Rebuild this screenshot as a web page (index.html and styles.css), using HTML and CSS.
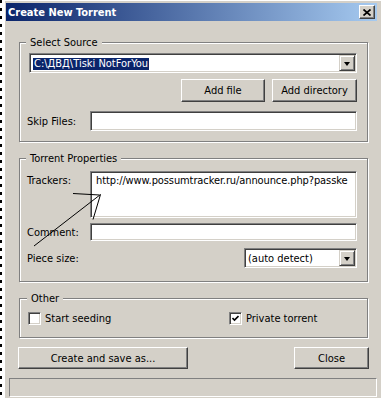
FILE: index.html
```html
<!DOCTYPE html>
<html>
<head>
<meta charset="utf-8">
<title>Create New Torrent</title>
<link rel="stylesheet" href="styles.css">
</head>
<body>
<div class="strip"></div>
<div class="window">
  <div class="titlebar">
    <span class="title">Create New Torrent</span>
    <span class="close-btn"><svg width="8" height="7" viewBox="0 0 8 7"><path d="M0.5 0.5 L7.5 6.5 M7.5 0.5 L0.5 6.5" stroke="#000" stroke-width="1.7" fill="none"/></svg></span>
  </div>
  <div class="body">
    <fieldset class="group g-source">
      <legend>Select Source</legend>
      <div class="combo">
        <span class="combo-value"><span class="sel">C:\ДВД\Tiski NotForYou</span></span>
        <span class="drop"><span class="tri"></span></span>
      </div>
      <div class="btn-row">
        <button class="btn w-addfile">Add file</button>
        <button class="btn w-adddir">Add directory</button>
      </div>
      <div class="field-row r-skip">
        <span class="lbl">Skip Files:</span>
        <div class="input"></div>
      </div>
    </fieldset>

    <fieldset class="group g-props">
      <legend>Torrent Properties</legend>
      <div class="field-row r-trackers">
        <span class="lbl lbl-top">Trackers:</span>
        <div class="input textarea"><span class="text">http://www.possumtracker.ru/announce.php?passke</span></div>
      </div>
      <div class="field-row r-comment">
        <span class="lbl">Comment:</span>
        <div class="input"></div>
      </div>
      <div class="field-row r-piece">
        <span class="lbl">Piece size:</span>
        <div class="combo select">
          <span class="combo-value">(auto detect)</span>
          <span class="drop"><span class="tri"></span></span>
        </div>
      </div>
    </fieldset>

    <fieldset class="group g-other">
      <legend>Other</legend>
      <div class="check-grid">
        <span class="check-item"><span class="checkbox"></span>Start seeding</span>
        <span class="check-item"><span class="checkbox checked"><svg width="7" height="7" viewBox="0 0 7 7"><path d="M0.5 3 L2.5 5 L6.5 1" stroke="#000" stroke-width="1.6" fill="none"/></svg></span>Private torrent</span>
      </div>
    </fieldset>

    <div class="action-row">
      <button class="btn w-create">Create and save as...</button>
      <button class="btn w-close">Close</button>
    </div>

    <div class="statusbar"></div>
  </div>
</div>
<svg class="annot" width="381" height="398" viewBox="0 0 381 398">
  <path d="M73 193.5 L99.5 195 M100.5 194.5 L93 219.5 M100.5 194.5 L34 246" stroke="#000" stroke-width="1" fill="none"/>
</svg>
</body>
</html>
```
FILE: styles.css
```css
* { box-sizing: border-box; }
html, body { margin: 0; padding: 0; }
body {
  width: 381px;
  height: 398px;
  overflow: hidden;
  position: relative;
  display: flex;
  background: #fff;
  font-family: "DejaVu Sans Condensed", "Liberation Sans", sans-serif;
  font-size: 11px;
  line-height: 13px;
  color: #000;
}
.strip {
  flex: none;
  width: 4px;
  background: repeating-linear-gradient(to bottom, #000 0 3px, #fff 3px 8px) no-repeat left top / 2px 100%, #fff;
}
.window {
  flex: none;
  width: 377px;
  min-width: 0;
  display: flex;
  flex-direction: column;
  background: #D4D0C8;
  padding: 3px 4px 0 2px;
  box-shadow: inset 1px 1px 0 #fff;
}
.titlebar {
  flex: none;
  height: 18px;
  display: flex;
  align-items: center;
  justify-content: space-between;
  padding: 0 2px 0 2px;
  background: linear-gradient(to right, #0A246A, #A6CAF0);
}
.title {
  color: #fff;
  font-weight: bold;
  font-size: 11px;
}
.close-btn {
  width: 16px;
  height: 14px;
  display: flex;
  align-items: center;
  justify-content: center;
  background: #D4D0C8;
  border: 1px solid;
  border-color: #fff #404040 #404040 #fff;
  box-shadow: inset -1px -1px 0 #808080;
}
.body {
  flex: 1;
  min-width: 0;
  display: flex;
  flex-direction: column;
}
.group {
  margin: 0 9px 0 13px;
  border: 1px solid #808080;
  box-shadow: inset 1px 1px 0 #fff, 1px 1px 0 #fff;
  min-inline-size: 0;
  min-width: 0;
}
.group legend {
  padding: 0 4px;
  margin-left: -1px;
  line-height: 13px;
  background: #D4D0C8;
}
.g-source { margin-top: 15px; padding: 4px 10px 10px 7px; }
.g-props { margin-top: 10px; padding: 6px 10px 13px 7px; }
.g-other { margin-top: 10px; padding: 7px 10px 12px 8px; }

.combo {
  display: flex;
  align-items: center;
  height: 20px;
  margin-left: 2px;
  background: #fff;
  border: 1px solid;
  border-color: #808080 #fff #fff #808080;
  box-shadow: inset 1px 1px 0 #404040, inset -1px -1px 0 #D4D0C8;
  padding: 1px;
}
.combo-value {
  flex: 1;
  min-width: 0;
  padding-left: 2px;
  white-space: nowrap;
  overflow: hidden;
}
.sel {
  display: inline-block;
  background: #0A246A;
  color: #fff;
  line-height: 12px;
  padding: 0 1px;
}
.drop {
  flex: none;
  width: 16px;
  height: 16px;
  display: flex;
  align-items: center;
  justify-content: center;
  background: #D4D0C8;
  border: 1px solid;
  border-color: #D4D0C8 #404040 #404040 #D4D0C8;
  box-shadow: inset 1px 1px 0 #fff, inset -1px -1px 0 #808080;
}
.tri {
  width: 0;
  height: 0;
  border-left: 3.5px solid transparent;
  border-right: 3.5px solid transparent;
  border-top: 4px solid #000;
  margin-top: 1px;
}
.btn-row {
  display: flex;
  justify-content: flex-end;
  gap: 7px;
  margin-top: 6px;
}
.btn {
  font: inherit;
  color: #000;
  height: 23px;
  padding: 0;
  background: #D4D0C8;
  border: 1px solid;
  border-color: #fff #404040 #404040 #fff;
  box-shadow: inset -1px -1px 0 #808080;
}
.w-addfile { width: 84px; }
.w-adddir { width: 85px; }

.field-row {
  display: flex;
  align-items: center;
  min-width: 0;
}
.lbl {
  flex: none;
  width: 63px;
}
.lbl-top { align-self: flex-start; padding-top: 3px; }
.input {
  flex: 1;
  min-width: 0;
  height: 20px;
  background: #fff;
  border: 1px solid;
  border-color: #808080 #fff #fff #808080;
  box-shadow: inset 1px 1px 0 #404040, inset -1px -1px 0 #D4D0C8;
}
.r-skip { margin-top: 9px; }
.textarea {
  height: 47px;
  padding: 2px 2px 0 5px;
  overflow: hidden;
  white-space: nowrap;
}
.textarea .text { letter-spacing: -0.1px; }
.r-comment { margin-top: 5px; }
.r-comment .input { height: 18px; }
.r-piece { margin-top: 7px; }
.select {
  margin-left: auto;
  width: 113px;
}
.select .combo-value { padding-left: 2px; }

.check-grid {
  display: grid;
  grid-template-columns: 201px 1fr;
  align-items: center;
}
.check-item {
  display: flex;
  align-items: center;
  gap: 4px;
  height: 13px;
}
.checkbox {
  flex: none;
  width: 13px;
  height: 13px;
  display: flex;
  align-items: center;
  justify-content: center;
  background: #fff;
  border: 1px solid;
  border-color: #808080 #fff #fff #808080;
  box-shadow: inset 1px 1px 0 #404040, inset -1px -1px 0 #D4D0C8;
}
.action-row {
  display: flex;
  justify-content: space-between;
  margin: 9px 8px 0 12px;
}
.btn.w-create { width: 170px; height: 22px; }
.btn.w-close { width: 75px; height: 22px; }
.statusbar {
  height: 19px;
  margin: 9px 0 0 3px;
  border: 1px solid;
  border-color: #808080 #fff #fff #808080;
}
.annot {
  position: absolute;
  left: 0;
  top: 0;
  pointer-events: none;
}
```
